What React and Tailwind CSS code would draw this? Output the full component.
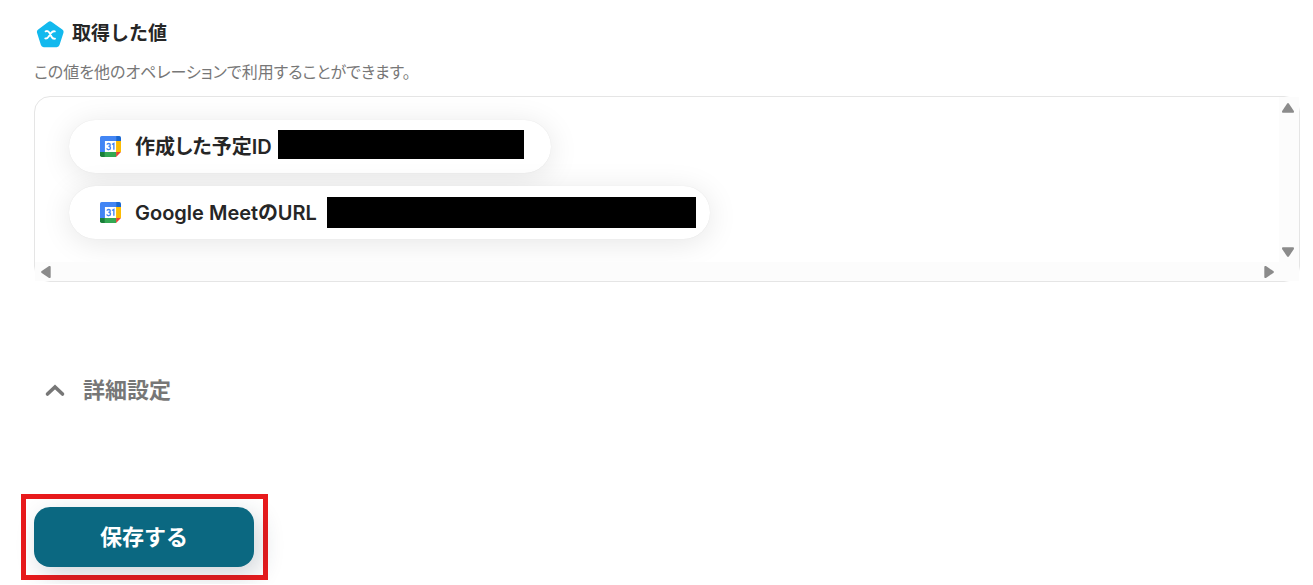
import React from "react";

function VariableIcon() {
  return (
    <svg viewBox="0 0 28 28" className="h-7 w-7 shrink-0" aria-hidden="true">
      <path
        d="M12.200 1.900a3 3 0 0 1 3.600 0l10.500 7.600a3 3 0 0 1 1.100 3.400l-3.900 12.200a3 3 0 0 1-2.800 2.100H7.700a3 3 0 0 1-2.800-2.100l-3.800-12.200a3 3 0 0 1 1.100-3.400z"
        fill="#12b9ee"
      />
      <path
        d="M9.600 11.300c2-.8 3-.2 4 1.700l1.900 3.700c.9 1.700 1.800 2.300 3.500 1.900M18.800 11.400c-1.700-.5-2.700.2-3.900 1.900l-2 2.900c-1.100 1.700-2.100 2.600-3.600 2.200"
        fill="none"
        stroke="#fff"
        strokeWidth="1.900"
        strokeLinecap="round"
      />
    </svg>
  );
}

function CalendarIcon() {
  return (
    <svg viewBox="0 0 200 200" className="h-[21px] w-[21px] shrink-0" aria-hidden="true">
      <path fill="#fff" d="M47 47h106v106H47z" />
      <path fill="#ea4335" d="M153 200l47-47h-47z" />
      <path fill="#fbbc04" d="M200 47h-47v106h47z" />
      <path fill="#34a853" d="M153 153H47v47h106z" />
      <path fill="#188038" d="M0 153v31a16 16 0 0 0 16 16h31v-47z" />
      <path fill="#1967d2" d="M200 47V16a16 16 0 0 0-16-16h-31v47z" />
      <path fill="#4285f4" d="M153 0H16A16 16 0 0 0 0 16v137h47V47h106z" />
      <path
        d="M66 82c4-14 32-14 32 3 0 10-8 14-18 14 12 0 20 5 20 16 0 20-32 20-36 3M114 81l18-11v60"
        fill="none"
        stroke="#4285f4"
        strokeWidth="13"
      />
    </svg>
  );
}

function Arrow({ className }) {
  return (
    <svg viewBox="0 0 12 10" className={className} aria-hidden="true">
      <path d="M5 .7a1.300 1.300 0 0 1 2 0l4.700 7c.6 1 .2 2-.8 2H1.100C.1 9.700-.3 8.700.3 7.700z" fill="#8b8b8b" />
    </svg>
  );
}

function OutputItem({ label, maskClass }) {
  return (
    <li className="flex h-[53px] items-center rounded-full bg-white pl-[31px] shadow-[0_4px_30px_rgba(0,0,0,0.1),0_0_1px_rgba(0,0,0,0.1)]">
      <CalendarIcon />
      <span className="ml-[14px] whitespace-nowrap text-[20px] leading-7 font-semibold text-[#262626]">{label}</span>
      <span className={maskClass} />
    </li>
  );
}

export default function App() {
  return (
    <main className="bg-white font-['Inter','Noto_Sans_CJK_JP',sans-serif] [font-feature-settings:'palt']">
      <section className="pt-5 pr-[13px] pl-[34px]">
        <div className="flex h-7 items-center gap-2 pl-[2px]">
          <VariableIcon />
          <h2 className="text-[19px] leading-7 font-bold text-[#262626] [font-feature-settings:normal]">取得した値</h2>
        </div>
        <p className="mt-3 text-[16px] leading-6 text-[#777]">この値を他のオペレーションで利用することができます。</p>

        <div className="mt-3 grid grid-cols-[1fr_20px] grid-rows-[1fr_19px] rounded-2xl border border-[#e5e5e5]">
          <ul className="flex flex-col items-start gap-[13px] overflow-hidden rounded-tl-2xl px-[34px] pt-[23px] pb-[23px]">
            <OutputItem label="作成した予定ID" maskClass="mr-[27px] mb-1 ml-[6px] h-[29px] w-[246px] bg-black" />
            <OutputItem label="Google MeetのURL" maskClass="mr-[14px] ml-[10px] h-[31px] w-[369px] bg-black" />
          </ul>
          <div className="flex flex-col items-center justify-between bg-[#fcfcfc] pt-1.5 pr-[2px] pb-[5px]">
            <Arrow className="h-[10px] w-3" />
            <Arrow className="h-[10px] w-3 rotate-180" />
          </div>
          <div className="flex items-center justify-between bg-[#fcfcfc] pr-1 pl-[5px]">
            <Arrow className="h-[10px] w-3 -rotate-90" />
            <Arrow className="h-[10px] w-3 rotate-90" />
          </div>
          <div className="bg-[#fcfcfc]" />
        </div>
      </section>

      <section className="mt-[92px] pl-[44px]">
        <button type="button" className="flex items-center gap-[17px] text-[22px] leading-8 font-bold text-[#777]">
          <svg viewBox="0 0 22 14" className="h-[14px] w-[22px]" aria-hidden="true">
            <path d="M3.500 11L11 4l7.500 7" fill="none" stroke="#777" strokeWidth="3.600" strokeLinecap="round" />
          </svg>
          詳細設定
        </button>
      </section>

      <div className="mt-[88px] pb-1 pl-[21px]">
        <div className="w-fit border-[5px] border-[#e81a1c] p-2 pr-[9px]">
          <button
            type="button"
            className="h-[60px] w-[220px] rounded-2xl bg-[#0b6881] text-[22px] font-bold text-white shadow-[6px_8px_24px_rgba(30,50,70,0.2)] [font-feature-settings:normal]"
          >
            保存する
          </button>
        </div>
      </div>
    </main>
  );
}
